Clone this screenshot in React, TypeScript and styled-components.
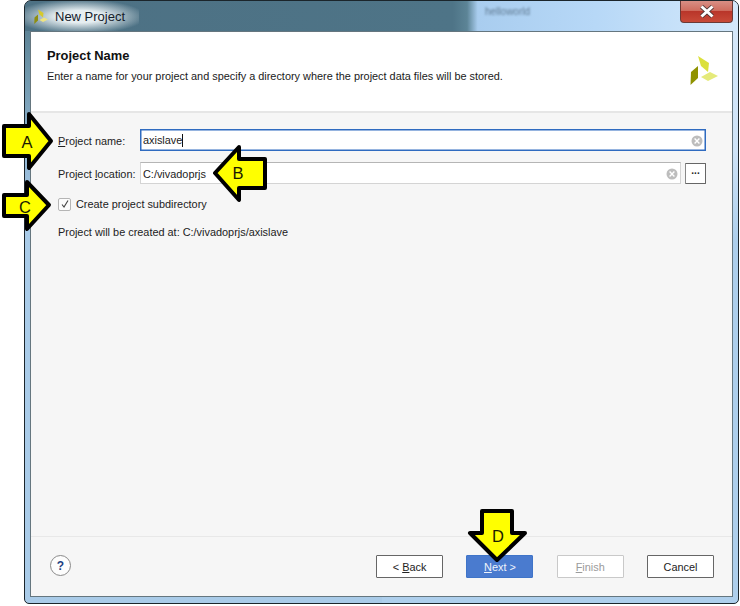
import React from "react";
import styled, { createGlobalStyle } from "styled-components";

const Global = createGlobalStyle`
  html, body { margin: 0; padding: 0; background: #fff; }
  body { font-family: "Liberation Sans", Arial, sans-serif; color: #1a1a1a; }
`;

const Page = styled.div`
  position: relative;
  width: 740px;
  height: 606px;
  overflow: hidden;
  padding: 0 1px 2px 24px;
  box-sizing: border-box;
  background: #fff;
`;

const Frame = styled.div`
  height: 604px;
  box-sizing: border-box;
  display: flex;
  flex-direction: column;
  border: 1px solid #1b252b;
  border-radius: 7px 7px 5px 5px;
  padding: 0 5px 6px;
  background-color: #a9cbe8;
  background-image:
    linear-gradient(180deg, #4f7486 0, #6f96aa 70px, #8fb4d2 150px, #a9cbe8 220px),
    linear-gradient(180deg, #d6e9fb 0, #cfe4f8 150px, #aecfec 240px);
  background-size: 50% 100%, 50% 100%;
  background-position: left top, right top;
  background-repeat: no-repeat;
`;

const TitleBar = styled.div`
  position: relative;
  height: 30px;
  flex: none;
  margin: 0 -5px;
  padding: 0 5px 0 9px;
  display: flex;
  align-items: center;
  border-radius: 6px 6px 0 0;
  background: linear-gradient(90deg, #4d7184 0%, #4e7487 60%, #5c8496 62%, #a9cdef 63.5%, #b7d8f7 80%, #d3e8fb 100%);
`;

const TitleBadge = styled.div`
  display: flex;
  align-items: center;
  gap: 6px;
  height: 30px;
  margin-left: -9px;
  padding: 0 14px 0 9px;
  background: radial-gradient(ellipse 58% 58% at 48% 52%, #e6eef1 35%, rgba(220, 232, 237, 0) 100%);
`;

const TitleText = styled.span`
  font-size: 13px;
  color: #14202a;
`;

const GhostText = styled.span`
  position: absolute;
  left: 460px;
  top: 5px;
  font-size: 10px;
  color: #5f7a92;
  filter: blur(1.1px);
`;

const CloseButton = styled.div`
  position: absolute;
  top: 0;
  right: 5px;
  width: 53px;
  height: 22px;
  box-sizing: border-box;
  display: flex;
  align-items: center;
  justify-content: center;
  border: 1px solid #6b3a36;
  border-top: none;
  border-radius: 0 0 4px 4px;
  background: linear-gradient(180deg, #d88f85 0%, #cf6e60 45%, #b9362a 50%, #c84a38 100%);
`;

const Content = styled.div`
  flex: 1;
  min-height: 0;
  display: flex;
  flex-direction: column;
  border: 1px solid #65767f;
  background: #f6f6f6;
`;

const Header = styled.header`
  height: 81px;
  flex: none;
  box-sizing: border-box;
  display: flex;
  justify-content: space-between;
  padding: 17px 12px 0 16px;
  background: #fff;
  border-bottom: 2px solid #e6e6e6;
`;

const HeaderTitle = styled.h1`
  margin: 0;
  font-size: 12.9px;
  line-height: 14px;
  font-weight: 700;
  color: #111;
`;

const HeaderNote = styled.p`
  margin: 6px 0 0;
  font-size: 10.9px;
  line-height: 14px;
  color: #1a1a1a;
`;

const HeaderMark = styled.div`
  margin-top: 6px;
`;

const Body = styled.main`
  flex: 1;
  padding: 16px 26px 0 27px;
  display: flex;
  flex-direction: column;
`;

const Row = styled.div`
  display: flex;
  align-items: center;
  height: 22px;
  margin-bottom: 11px;
`;

const Label = styled.label`
  width: 82px;
  flex: none;
  padding-top: 1px;
  font-size: 10.9px;
  color: #222;
  white-space: nowrap;
`;

const Field = styled.div<{ $focused?: boolean }>`
  flex: 1;
  height: 22px;
  box-sizing: border-box;
  display: flex;
  align-items: center;
  padding: 1px 2px 0 2px;
  background: #fff;
  border: 1px solid ${(p) => (p.$focused ? "#2f6bc0" : "#d4d4d4")};
  ${(p) => (p.$focused ? "box-shadow: inset 0 0 0 0.5px #2f6bc0;" : "border-top-color:#b5b5b5;")}
  font-size: 10.9px;
  color: #222;
`;

const Value = styled.span`
  flex: 1;
`;

const Caret = styled.span`
  display: inline-block;
  width: 1px;
  height: 13px;
  background: #111;
  vertical-align: -3px;
`;

const Browse = styled.button`
  width: 21px;
  height: 21px;
  flex: none;
  margin-left: 4px;
  padding: 0 0 5px;
  font: 700 10px/1 "Liberation Sans", sans-serif;
  background: #fff;
  color: #222;
  border: 1px solid #666;
  border-left-color: #888;
  border-radius: 1px;
`;

const CheckRow = styled.div`
  display: flex;
  align-items: center;
  gap: 5px;
  height: 14px;
  margin-top: 2px;
  font-size: 10.9px;
  color: #222;
`;

const CheckBox = styled.span`
  width: 13px;
  height: 13px;
  box-sizing: border-box;
  display: flex;
  align-items: center;
  justify-content: center;
  background: #fcfcfc;
  border: 1px solid #b5b5b5;
  border-radius: 2px;
`;

const Note = styled.div`
  margin-top: 15px;
  font-size: 10.9px;
  line-height: 13px;
  color: #222;
`;

const Footer = styled.footer`
  height: 60px;
  flex: none;
  box-sizing: border-box;
  border-top: 1px solid #e8e8e8;
  display: flex;
  align-items: flex-start;
  padding: 18px 18px 0 19px;
`;

const HelpButton = styled.button`
  width: 21px;
  height: 21px;
  padding: 0;
  border-radius: 50%;
  background: #fdfdfd;
  border: 1px solid #8a8a8a;
  color: #1c3f82;
  font: 700 12px/1 "Liberation Sans", sans-serif;
`;

const Buttons = styled.div`
  margin-left: auto;
  display: flex;
  gap: 23.3px;
`;

const DialogButton = styled.button<{ $variant?: "primary" | "disabled" }>`
  width: 67px;
  height: 23px;
  padding: 0;
  box-sizing: border-box;
  font: 10.9px "Liberation Sans", sans-serif;
  border: 1px solid ${(p) => (p.$variant === "primary" ? "#3f74c8" : p.$variant === "disabled" ? "#c9c9c9" : "#666")};
  background: ${(p) => (p.$variant === "primary" ? "#4a7bcf" : "#fff")};
  color: ${(p) => (p.$variant === "primary" ? "#eef3fb" : p.$variant === "disabled" ? "#9b9b9b" : "#222")};
  border-radius: 1px;
`;

const Callout = styled.svg<{ $x: number; $y: number }>`
  position: absolute;
  left: ${(p) => p.$x}px;
  top: ${(p) => p.$y}px;
  overflow: visible;
`;

const CalloutLetter = styled.span<{ $x: number; $y: number }>`
  position: absolute;
  left: ${(p) => p.$x}px;
  top: ${(p) => p.$y}px;
  width: 20px;
  text-align: center;
  font-size: 16.5px;
  line-height: 18px;
  color: #1a1a00;
`;

const Logo = ({ size, vivid }: { size: number; vivid?: boolean }) => (
  <svg width={size} height={size} viewBox="0 0 30 30">
    <path d="M8 1 L19 8 L18 17 L11 11 Z" fill={vivid ? "#d6c92c" : "#dbe03c"} />
    <path d="M20 17 L28 21 L18 26 L11 22 Z" fill={vivid ? "#efe480" : "#e5ea7a"} />
    <path d="M8 11 L8 23 L0.5 30 L1 17 Z" fill={vivid ? "#8e8e10" : "#8f9200"} />
  </svg>
);

const shapes = {
  a: "3,14 28,14 28,2 50,29 28,56 28,44 3,44",
  b: "52,13 26,13 26,1 2,27 26,54 26,42 52,42",
  c: "3,18 26,18 26,5 48,28 26,52 26,39 3,39",
  d: "14,2 44,2 44,24 57,24 29,51 2,24 14,24",
};

const Arrow = ({ shape, x, y, w, h }: { shape: keyof typeof shapes; x: number; y: number; w: number; h: number }) => (
  <Callout $x={x} $y={y} width={w} height={h} viewBox={`0 0 ${w} ${h}`}>
    <polygon points={shapes[shape]} fill="#ffff00" stroke="#000" strokeWidth={4} strokeLinejoin="round" />
  </Callout>
);

function ClearIcon() {
  return (
    <svg width="12" height="12" viewBox="0 0 12 12">
      <circle cx="6" cy="6" r="5.5" fill="#bdbdbd" />
      <path d="M3.6 3.6 L8.4 8.4 M8.4 3.6 L3.6 8.4" stroke="#fff" strokeWidth="1.4" />
    </svg>
  );
}

export default function App() {
  return (
    <Page>
      <Global />
      <Frame>
        <TitleBar>
          <TitleBadge>
            <Logo size={15} vivid />
            <TitleText>New Project</TitleText>
          </TitleBadge>
          <GhostText>helloworld</GhostText>
          <CloseButton>
            <svg width="16" height="13" viewBox="0 0 16 13">
              <path d="M2.5 1.5 L13.5 11.5 M13.5 1.5 L2.5 11.5" stroke="#4a3434" strokeWidth="4.4" />
              <path d="M2.5 1.5 L13.5 11.5 M13.5 1.5 L2.5 11.5" stroke="#fff" strokeWidth="3" />
            </svg>
          </CloseButton>
        </TitleBar>
        <Content>
          <Header>
            <div>
              <HeaderTitle>Project Name</HeaderTitle>
              <HeaderNote>Enter a name for your project and specify a directory where the project data files will be stored.</HeaderNote>
            </div>
            <HeaderMark>
              <Logo size={30} />
            </HeaderMark>
          </Header>
          <Body>
            <Row>
              <Label><u>P</u>roject name:</Label>
              <Field $focused>
                <Value>axislave<Caret /></Value>
                <ClearIcon />
              </Field>
            </Row>
            <Row>
              <Label>Project <u>l</u>ocation:</Label>
              <Field>
                <Value>C:/vivadoprjs</Value>
                <ClearIcon />
              </Field>
              <Browse>...</Browse>
            </Row>
            <CheckRow>
              <CheckBox>
                <svg width="10" height="10" viewBox="0 0 10 10">
                  <path d="M2 5.5 L4 8 L8 1.5" fill="none" stroke="#444" strokeWidth="1.1" />
                </svg>
              </CheckBox>
              Create project subdirectory
            </CheckRow>
            <Note>Project will be created at: C:/vivadoprjs/axislave</Note>
          </Body>
          <Footer>
            <HelpButton>?</HelpButton>
            <Buttons>
              <DialogButton>&lt; <u>B</u>ack</DialogButton>
              <DialogButton $variant="primary"><u>N</u>ext &gt;</DialogButton>
              <DialogButton $variant="disabled"><u>F</u>inish</DialogButton>
              <DialogButton>Cancel</DialogButton>
            </Buttons>
          </Footer>
        </Content>
      </Frame>
      <Arrow shape="a" x={1} y={112} w={52} h={58} />
      <CalloutLetter $x={17} $y={133}>A</CalloutLetter>
      <Arrow shape="b" x={213} y={146} w={54} h={56} />
      <CalloutLetter $x={228} $y={164}>B</CalloutLetter>
      <Arrow shape="c" x={1} y={177} w={50} h={56} />
      <CalloutLetter $x={15} $y={198}>C</CalloutLetter>
      <Arrow shape="d" x={468} y={509} w={59} h={54} />
      <CalloutLetter $x={488} $y={527}>D</CalloutLetter>
    </Page>
  );
}
